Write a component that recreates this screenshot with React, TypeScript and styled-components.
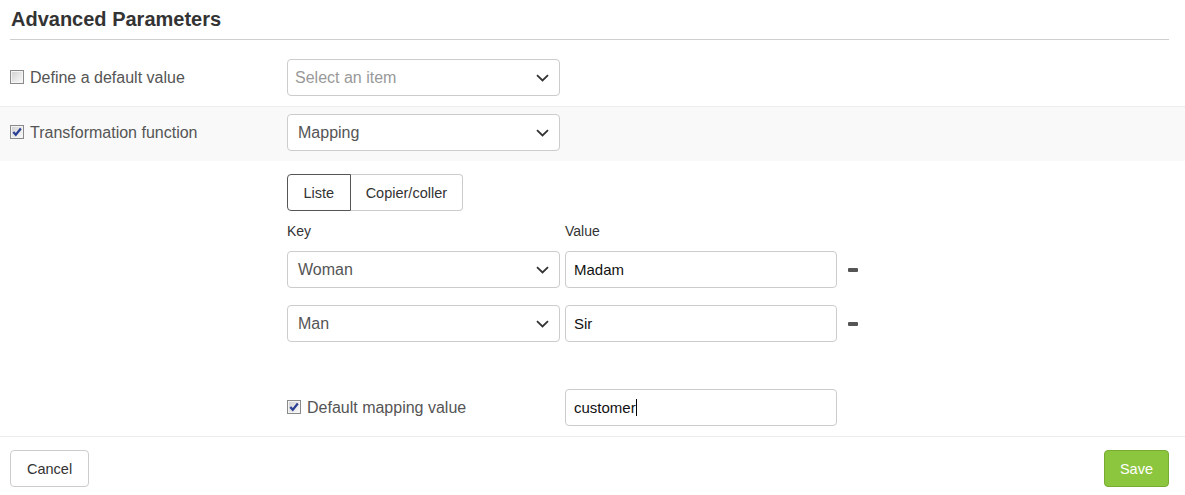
import styled, { createGlobalStyle } from "styled-components";

const GlobalStyle = createGlobalStyle`
  html, body {
    margin: 0;
    background: #fff;
    font-family: "Liberation Sans", Arial, sans-serif;
  }
`;

const Page = styled.div`
  width: 1185px;
  height: 495px;
  box-sizing: border-box;
  padding: 0 16px 0 10px;
  overflow: hidden;
`;

const Title = styled.h3`
  margin: 0;
  padding: 7px 0 0 1px;
  height: 32px;
  font-size: 20px;
  font-weight: bold;
  color: #333;
  line-height: 24px;
`;

const Divider = styled.hr`
  margin: 0 0 12px;
  border: 0;
  border-top: 1px solid #cfcfcf;
`;

const FieldRow = styled.div<{ $shaded?: boolean; $bordered?: boolean }>`
  display: grid;
  grid-template-columns: 277px 273px;
  align-items: center;
  margin: 0 -16px 0 -10px;
  padding: 7px 16px 10px 10px;
  background: ${(p) => (p.$shaded ? "#f9f9f9" : "transparent")};
  border-top: ${(p) => (p.$bordered ? "1px solid #ececec" : "0")};
`;

const CheckLabel = styled.label<{ $size?: number }>`
  display: flex;
  align-items: center;
  gap: 6px;
  font-size: ${(p) => p.$size ?? 16}px;
  color: #555;
`;

const Box = styled.span`
  width: 14px;
  height: 14px;
  box-sizing: border-box;
  border: 1px solid #8a8a8a;
  box-shadow: inset 0 0 0 1px #f4f4f4;
  background: linear-gradient(135deg, #cfcfcf 0%, #e8e8e8 55%, #fbfbfb 100%);
  display: flex;
  align-items: center;
  justify-content: center;
  flex: none;
  position: relative;
  top: -1px;
`;

const Checkbox = ({ checked }: { checked?: boolean }) => (
  <Box>
    {checked && (
      <svg width="12" height="12" viewBox="0 0 12 12">
        <path d="M2.3 6 L4.8 8.8 L9.8 2.5" fill="none" stroke="#2b3f94" strokeWidth="2.2" />
      </svg>
    )}
  </Box>
);

const SelectBox = styled.div<{ $placeholder?: boolean; $width?: number }>`
  width: ${(p) => p.$width ?? 273}px;
  height: 37px;
  box-sizing: border-box;
  border: 1px solid #ccc;
  border-radius: 4px;
  background: #fff;
  display: flex;
  align-items: center;
  justify-content: space-between;
  padding: 0 10px 0 ${(p) => (p.$placeholder ? 7 : 10)}px;
  font-size: 16px;
  color: ${(p) => (p.$placeholder ? "#999" : "#555")};
`;

const Chevron = () => (
  <svg width="13" height="8" viewBox="0 0 13 8">
    <polyline points="1,1.2 6.5,6.5 12,1.2" fill="none" stroke="#333" strokeWidth="1.8" />
  </svg>
);

const Select = ({ value, placeholder }: { value?: string; placeholder?: string }) => (
  <SelectBox $placeholder={!value}>
    <span>{value ?? placeholder}</span>
    <Chevron />
  </SelectBox>
);

const Mapping = styled.section`
  padding: 13px 0 0 277px;
`;

const Tabs = styled.div`
  display: flex;
`;

const Tab = styled.div<{ $active?: boolean; $first?: boolean }>`
  height: 37px;
  box-sizing: border-box;
  display: flex;
  align-items: center;
  padding: 0 ${(p) => (p.$first ? 15.5 : 15)}px;
  font-size: 14.5px;
  color: #333;
  background: #fff;
  border: 1px solid ${(p) => (p.$active ? "#555" : "#ccc")};
  border-radius: ${(p) => (p.$first ? "4px 0 0 4px" : "0 4px 4px 0")};
  ${(p) => (!p.$first ? "border-left: 0;" : "")}
`;

const PairGrid = styled.div`
  display: grid;
  grid-template-columns: 273px 272px 22px;
  column-gap: 5px;
  align-items: center;
`;

const Heads = styled(PairGrid)`
  margin: 10px 0 10px;
  font-size: 14px;
  color: #333;
  line-height: 20px;
`;

const Pairs = styled.div`
  display: flex;
  flex-direction: column;
  gap: 17px;
`;

const TextInput = styled.div`
  height: 37px;
  box-sizing: border-box;
  border: 1px solid #ccc;
  border-radius: 4px;
  background: #fff;
  display: flex;
  align-items: center;
  padding: 0 8px;
  font-size: 15px;
  color: #111;
`;

const Caret = styled.span`
  display: inline-block;
  width: 1px;
  height: 17px;
  background: #000;
`;

const Minus = styled.span`
  margin-left: 6px;
  width: 10px;
  height: 4px;
  border-radius: 1px;
  background: #555;
`;

const DefaultRow = styled.div`
  display: grid;
  grid-template-columns: 278px 272px;
  align-items: center;
  margin-top: 47px;
  padding-bottom: 10px;
`;

const Footer = styled.footer`
  display: flex;
  justify-content: space-between;
  margin: 0 -16px 0 -10px;
  padding: 13px 16px 0 10px;
  border-top: 1px solid #ececec;
`;

const Button = styled.button<{ $primary?: boolean }>`
  height: 37px;
  box-sizing: border-box;
  padding: 0 ${(p) => (p.$primary ? 15 : 16)}px;
  font-family: inherit;
  font-size: 14.5px;
  border-radius: 4px;
  border: 1px solid ${(p) => (p.$primary ? "#78ab32" : "#ccc")};
  background: ${(p) => (p.$primary ? "#8cc63f" : "#fff")};
  color: ${(p) => (p.$primary ? "#fff" : "#333")};
`;

const pairs = [
  { key: "Woman", value: "Madam" },
  { key: "Man", value: "Sir" },
];

export default function App() {
  return (
    <Page>
      <GlobalStyle />
      <Title>Advanced Parameters</Title>
      <Divider />
      <FieldRow>
        <CheckLabel>
          <Checkbox />
          Define a default value
        </CheckLabel>
        <Select placeholder="Select an item" />
      </FieldRow>
      <FieldRow $shaded $bordered>
        <CheckLabel>
          <Checkbox checked />
          Transformation function
        </CheckLabel>
        <Select value="Mapping" />
      </FieldRow>
      <Mapping>
        <Tabs>
          <Tab $active $first>
            Liste
          </Tab>
          <Tab>Copier/coller</Tab>
        </Tabs>
        <Heads>
          <span>Key</span>
          <span>Value</span>
        </Heads>
        <Pairs>
          {pairs.map((p) => (
            <PairGrid key={p.key}>
              <Select value={p.key} />
              <TextInput>{p.value}</TextInput>
              <Minus />
            </PairGrid>
          ))}
        </Pairs>
        <DefaultRow>
          <CheckLabel $size={16}>
            <Checkbox checked />
            Default mapping value
          </CheckLabel>
          <TextInput>
            customer
            <Caret />
          </TextInput>
        </DefaultRow>
      </Mapping>
      <Footer>
        <Button>Cancel</Button>
        <Button $primary>Save</Button>
      </Footer>
    </Page>
  );
}
